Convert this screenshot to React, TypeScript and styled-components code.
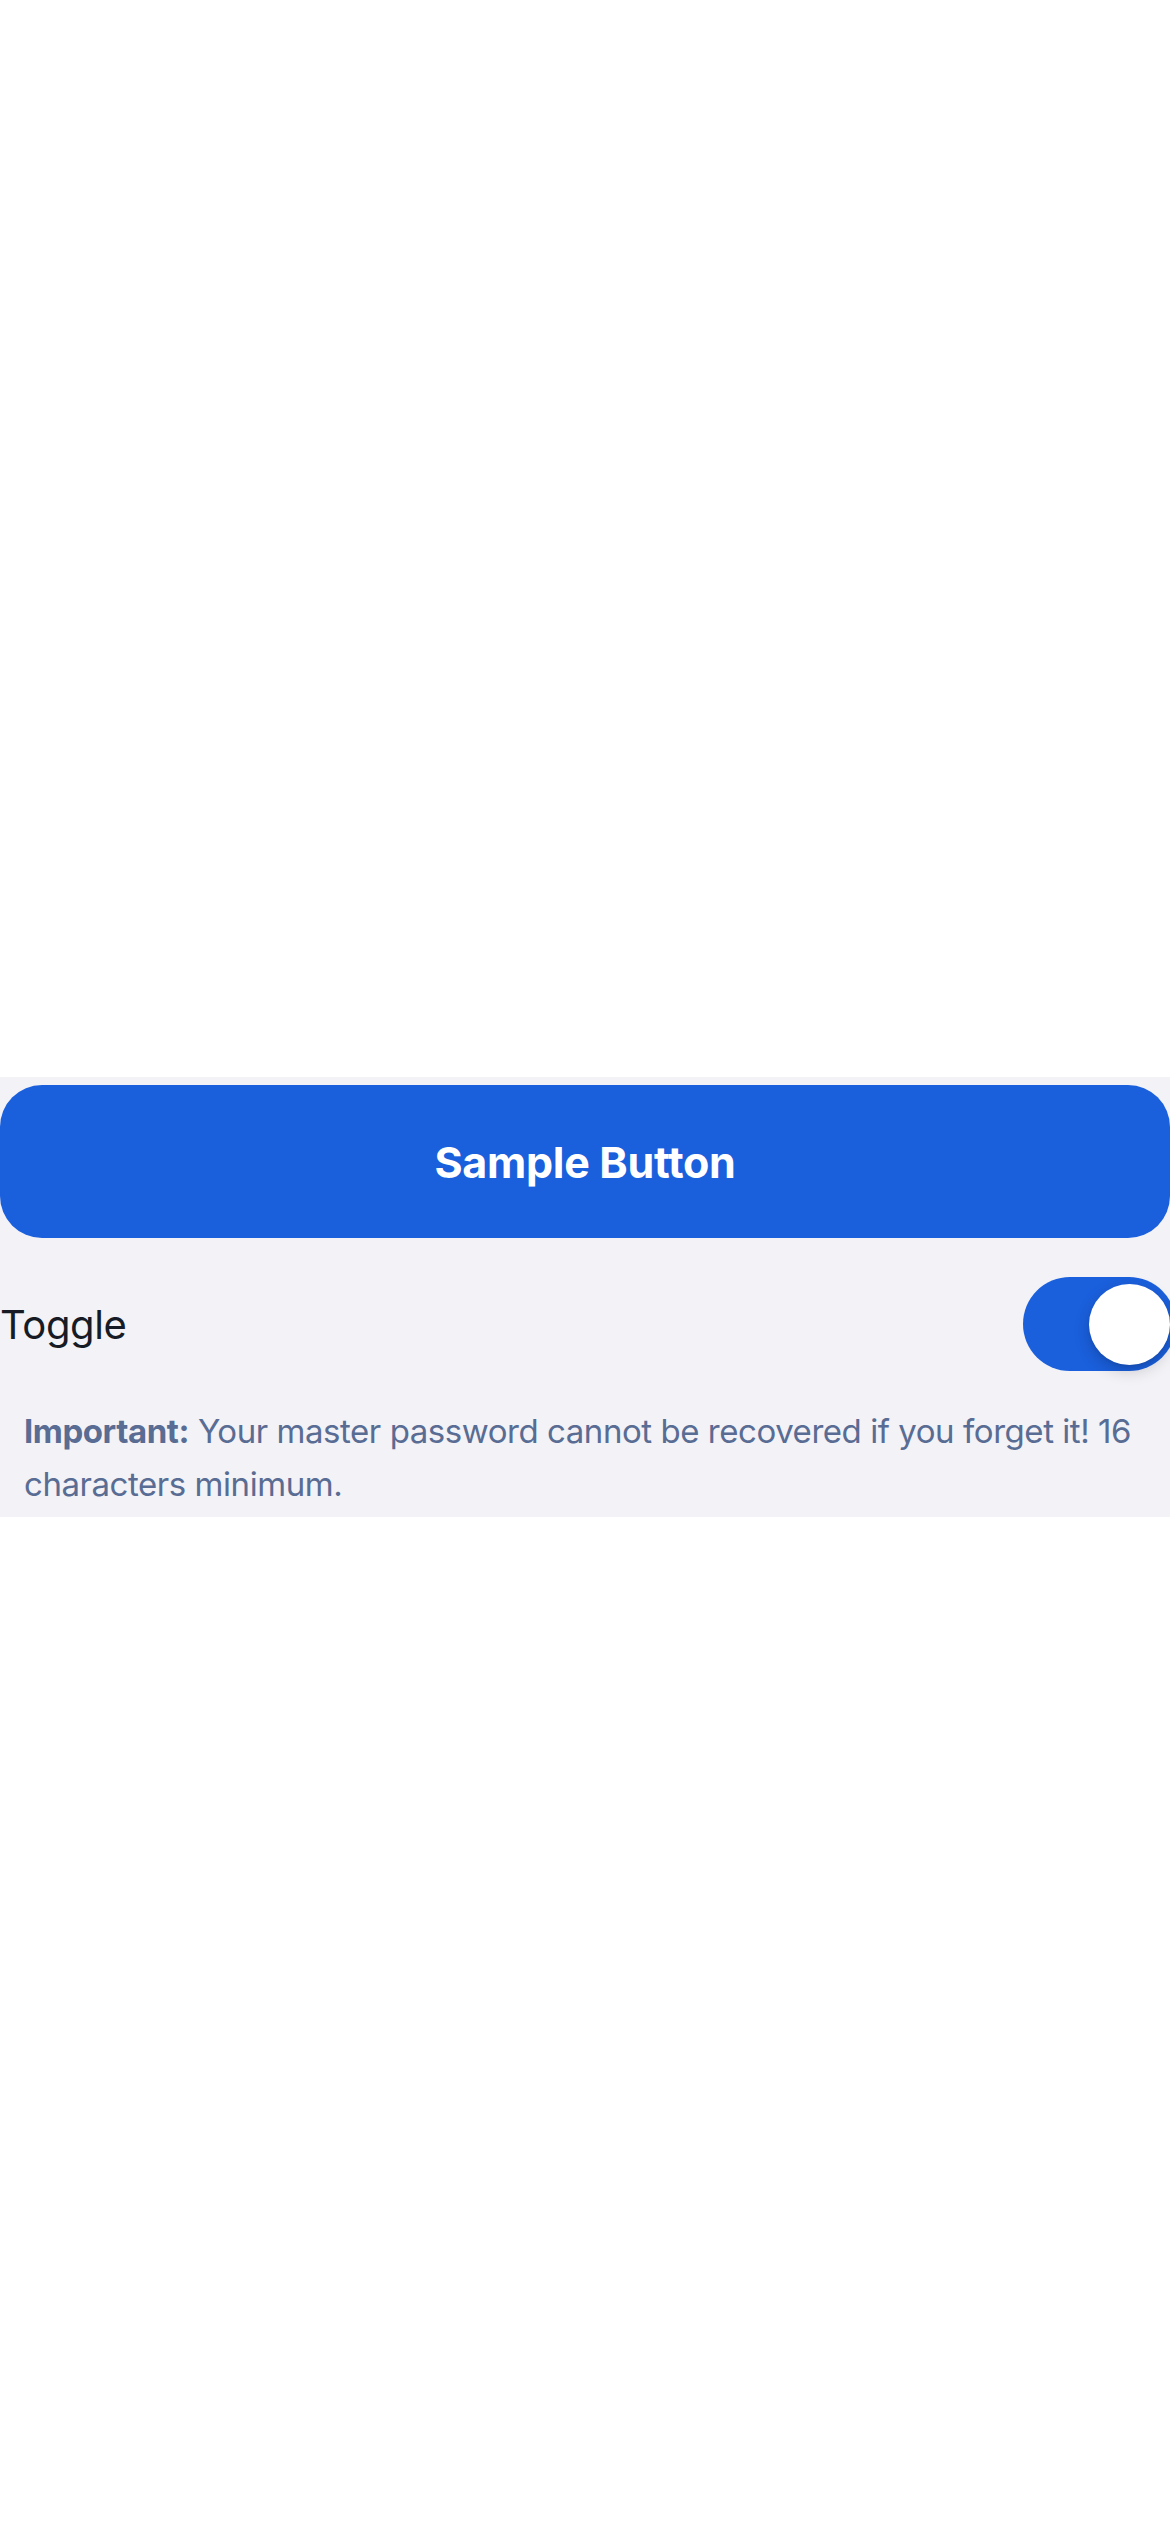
import React, { useState } from 'react';
import styled, { createGlobalStyle } from 'styled-components';

const GlobalStyle = createGlobalStyle`
  html, body {
    margin: 0;
    padding: 0;
    background: #ffffff;
    overflow-x: hidden;
  }
  body {
    font-family: Inter, "Noto Sans", sans-serif;
  }
`;

const Page = styled.div`
  min-height: 2532px;
  padding-top: 1077px;
  box-sizing: border-box;
`;

const Panel = styled.section`
  background: #f2f2f7;
  padding: 8px 0 6px;
  display: flex;
  flex-direction: column;
`;

const PrimaryButton = styled.button`
  height: 153px;
  width: 100%;
  border: none;
  border-radius: 42px;
  background: #1a5fdc;
  color: #ffffff;
  font-family: Inter, "Noto Sans", sans-serif;
  font-weight: 700;
  font-size: 43px;
  letter-spacing: -0.3px;
  cursor: pointer;
`;

const ToggleRow = styled.div`
  margin-top: 39px;
  height: 94px;
  display: flex;
  align-items: center;
  justify-content: space-between;
`;

const ToggleLabel = styled.span`
  font-size: 40px;
  color: #161b25;
  letter-spacing: -0.4px;
`;

const Track = styled.button<{ $on: boolean }>`
  width: 153px;
  height: 94px;
  margin-right: -6px;
  padding: 6px;
  border: none;
  border-radius: 47px;
  background: ${(p) => (p.$on ? '#1a5fdc' : '#e3e3e8')};
  display: flex;
  justify-content: ${(p) => (p.$on ? 'flex-end' : 'flex-start')};
  align-items: center;
  box-sizing: border-box;
  cursor: pointer;
`;

const Thumb = styled.span`
  width: 81px;
  height: 81px;
  border-radius: 50%;
  background: #ffffff;
  box-shadow: 0 6px 16px rgba(0, 0, 0, 0.18), 0 2px 3px rgba(0, 0, 0, 0.08);
`;

const Note = styled.p`
  margin: 34px 0 0;
  padding: 0 24px;
  font-size: 33px;
  line-height: 53px;
  color: #596c93;
  letter-spacing: -0.45px;

  strong {
    font-weight: 700;
  }
`;

export default function App() {
  const [on, setOn] = useState(true);
  return (
    <>
      <GlobalStyle />
      <Page>
        <Panel>
          <PrimaryButton>Sample Button</PrimaryButton>
          <ToggleRow>
            <ToggleLabel>Toggle</ToggleLabel>
            <Track $on={on} onClick={() => setOn(!on)} aria-label="Toggle">
              <Thumb />
            </Track>
          </ToggleRow>
          <Note>
            <strong>Important:</strong> Your master password cannot be recovered if you forget it! 16 characters minimum.
          </Note>
        </Panel>
      </Page>
    </>
  );
}
